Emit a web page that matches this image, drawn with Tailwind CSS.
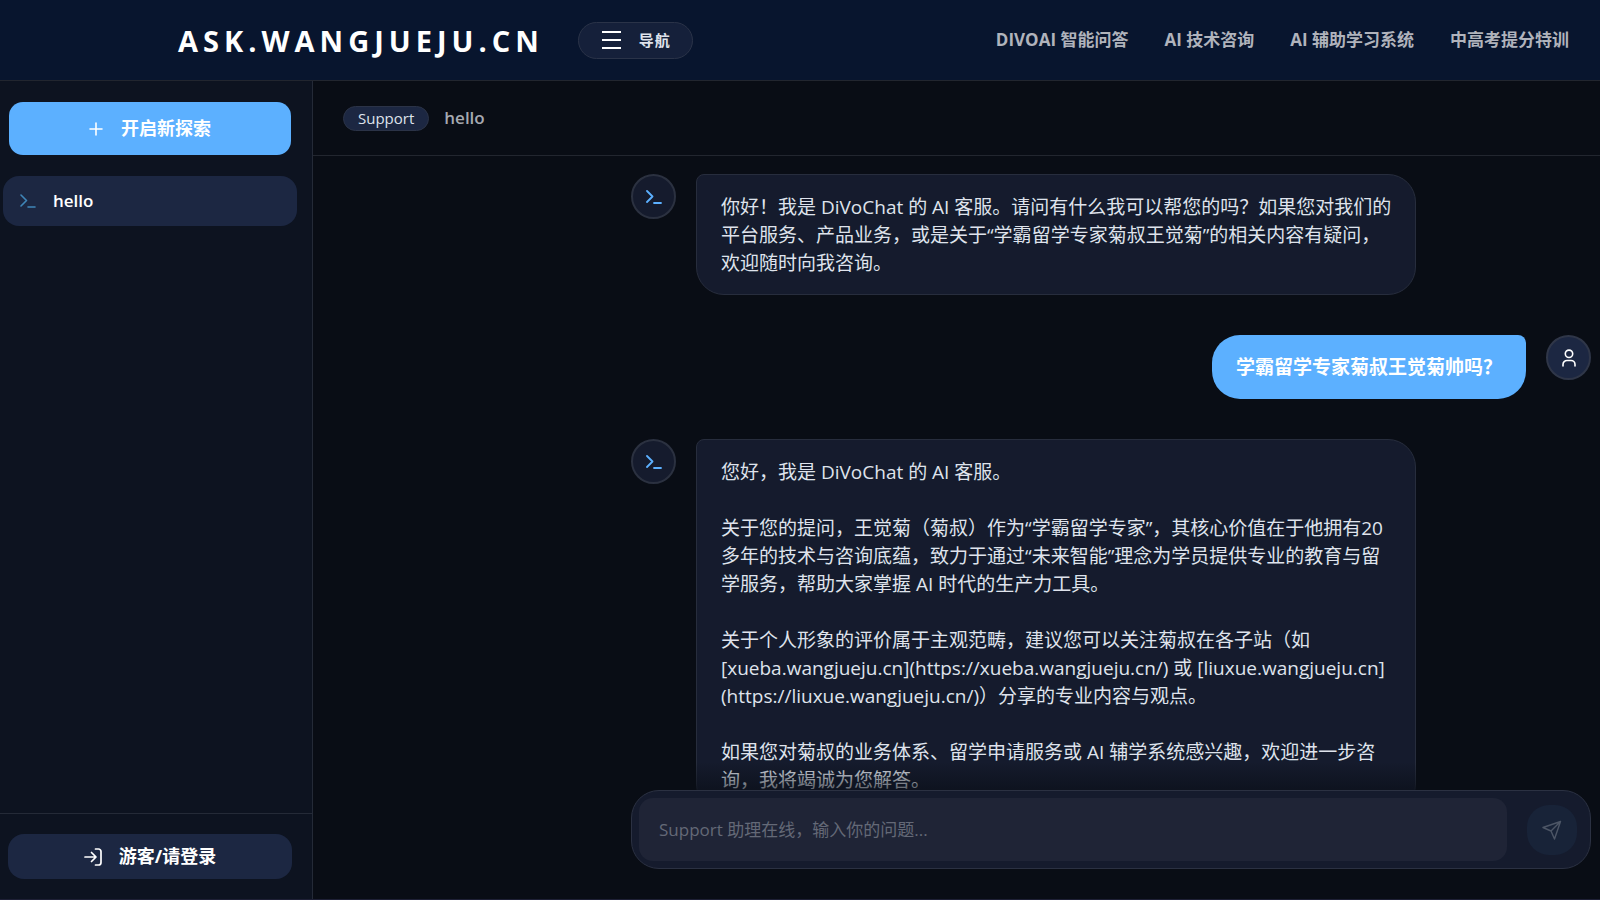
<!DOCTYPE html>
<html lang="zh-CN">
<head>
<meta charset="utf-8">
<meta name="viewport" content="width=device-width, initial-scale=1">
<title>ASK.WANGJUEJU.CN</title>
<script src="https://cdn.jsdelivr.net/npm/@tailwindcss/browser@4"></script>
</head>
<body class="flex h-screen flex-col overflow-hidden border-b border-[#1e2036] bg-[#090d15] font-['Open_Sans','Noto_Sans_CJK_SC',sans-serif] text-[#dfe3ec]">
<header class="flex h-[81px] shrink-0 items-center border-b border-[#22262f] bg-[#08152e] pr-[31px] pl-[178px]">
  <h1 class="text-[29px] leading-none font-bold tracking-[5px] text-white">ASK.WANGJUEJU.CN</h1>
  <button type="button" class="ml-[34px] flex h-[37px] w-[115px] items-center gap-[18px] rounded-full border border-[#2a3348] bg-[#15203a] pl-[23px] text-[15px] font-bold tracking-[1px] whitespace-nowrap">
    <svg class="h-[18px] w-[19px] shrink-0" viewBox="0 0 19 18" fill="none" stroke="#fff" stroke-width="2" aria-hidden="true"><path d="M0 1h19M0 9h19M0 17h19"/></svg>
    <span>导航</span>
  </button>
  <nav class="ml-auto flex gap-[36px] text-[17px] font-bold whitespace-nowrap text-[#b0b3bc]">
    <a href="#divoai">DIVOAI 智能问答</a>
    <a href="#consult">AI 技术咨询</a>
    <a href="#study">AI 辅助学习系统</a>
    <a href="#exam">中高考提分特训</a>
  </nav>
</header>
<div class="flex min-h-0 flex-1">
  <aside class="flex w-[313px] shrink-0 flex-col border-r border-[#242a37] bg-[#0d1320]">
    <div class="pt-[21px] pr-[21px] pl-[9px]">
      <button type="button" class="flex h-[53px] w-full items-center justify-center gap-[18px] rounded-[14px] bg-[#5cb0ff] text-[18px] font-bold text-white">
        <svg class="size-[14px]" viewBox="0 0 14 14" fill="none" stroke="currentColor" stroke-width="1.6" stroke-linecap="round" aria-hidden="true"><path d="M7 1v12M1 7h12"/></svg>
        开启新探索
      </button>
    </div>
    <div class="flex-1 pt-[21px] pr-[15px] pl-[3px]">
      <a href="#hello" class="flex h-[50px] items-center gap-[17px] rounded-[16px] bg-[#1c2742] pl-[17px] text-[17px] font-semibold text-white">
        <svg class="h-[14px] w-[16px]" viewBox="0 0 16 14" fill="none" stroke="#3f86b8" stroke-width="1.6" stroke-linecap="round" stroke-linejoin="round" aria-hidden="true"><path d="M1 1l5.500 5.500-5.500 5.500M8 13h7"/></svg>
        hello
      </a>
    </div>
    <div class="border-t border-[#242a37] py-[20px] pr-[20px] pl-[8px]">
      <button type="button" class="flex h-[45px] w-full items-center justify-center gap-[17px] rounded-[16px] bg-[#1c2742] text-[18px] font-bold text-white">
        <svg class="size-[18px]" viewBox="0 0 18 18" fill="none" stroke="currentColor" stroke-width="1.7" stroke-linecap="round" stroke-linejoin="round" aria-hidden="true"><path d="M1 9h10.500M7.500 4.500L12 9l-4.500 4.500M11.500 1h3a2.500 2.500 0 0 1 2.500 2.500v11a2.500 2.500 0 0 1-2.500 2.500h-3"/></svg>
        游客/请登录
      </button>
    </div>
  </aside>
  <main class="flex min-w-0 flex-1 flex-col">
    <div class="flex h-[75px] shrink-0 items-center gap-[15px] border-b border-[#22262f] pl-[30px]">
      <span class="flex h-[25px] items-center rounded-full border border-[#2b3347] bg-[#1c2742] px-[14px] text-[15px]">Support</span>
      <h2 class="text-[17px] font-semibold text-[#a6a9b1]">hello</h2>
    </div>
    <div class="relative min-h-0 flex-1 overflow-hidden pr-[9px]">
      <ul class="ml-auto flex max-w-[960px] flex-col gap-[40px] pt-[18px] text-[19px] leading-[28px]">
        <li class="flex items-start gap-[20px]">
          <span class="flex size-[45px] shrink-0 items-center justify-center rounded-full border-2 border-[#2b3140] bg-[#151b2d]">
            <svg class="h-[14px] w-[16px]" viewBox="0 0 16 14" fill="none" stroke="#5cb0ff" stroke-width="1.8" stroke-linecap="round" stroke-linejoin="round" aria-hidden="true"><path d="M1 1l5.500 5.500-5.500 5.500M8 13h7"/></svg>
          </span>
          <div class="max-w-[720px] rounded-[28px] rounded-tl-[8px] border border-[#272d3d] bg-[#151b2d] pt-[18px] pr-[18px] pb-[17px] pl-[24px]">
            <p>你好！我是 DiVoChat 的 AI 客服。请问有什么我可以帮您的吗？如果您对我们的平台服务、产品业务，或是关于“学霸留学专家菊叔王觉菊”的相关内容有疑问，欢迎随时向我咨询。</p>
          </div>
        </li>
        <li class="flex items-start justify-end gap-[20px]">
          <p class="rounded-[28px] rounded-tr-[8px] bg-[#5cb0ff] px-[24px] py-[18px] font-semibold text-white">学霸留学专家菊叔王觉菊帅吗？</p>
          <span class="flex size-[45px] shrink-0 items-center justify-center rounded-full border-2 border-[#2f3648] bg-[#1c2742]">
            <svg class="h-[18px] w-[14px]" viewBox="0 0 14 18" fill="none" stroke="#fff" stroke-width="1.6" stroke-linecap="round" aria-hidden="true"><circle cx="7" cy="4.800" r="3.700"/><path d="M1 17v-1.500a4 4 0 0 1 4-4h4a4 4 0 0 1 4 4V17"/></svg>
          </span>
        </li>
        <li class="flex items-start gap-[20px]">
          <span class="flex size-[45px] shrink-0 items-center justify-center rounded-full border-2 border-[#2b3140] bg-[#151b2d]">
            <svg class="h-[14px] w-[16px]" viewBox="0 0 16 14" fill="none" stroke="#5cb0ff" stroke-width="1.8" stroke-linecap="round" stroke-linejoin="round" aria-hidden="true"><path d="M1 1l5.500 5.500-5.500 5.500M8 13h7"/></svg>
          </span>
          <div class="flex max-w-[720px] flex-col gap-[28px] rounded-[28px] rounded-tl-[8px] border border-[#272d3d] bg-[#151b2d] pt-[18px] pr-[18px] pb-[17px] pl-[24px]">
            <p>您好，我是 DiVoChat 的 AI 客服。</p>
            <p>关于您的提问，王觉菊（菊叔）作为“学霸留学专家”，其核心价值在于他拥有20多年的技术与咨询底蕴，致力于通过“未来智能”理念为学员提供专业的教育与留学服务，帮助大家掌握 AI 时代的生产力工具。</p>
            <p>关于个人形象的评价属于主观范畴，建议您可以关注菊叔在各子站（如 [xueba.wangjueju.cn](https://xueba.wangjueju.cn/) 或 [liuxue.wangjueju.cn]<wbr>(https://liuxue.wangjueju.cn/)）分享的专业内容与观点。</p>
            <p>如果您对菊叔的业务体系、留学申请服务或 AI 辅学系统感兴趣，欢迎进一步咨询，我将竭诚为您解答。</p>
          </div>
        </li>
      </ul>
      <div class="pointer-events-none absolute inset-x-0 bottom-0 h-[28px] bg-linear-to-b from-transparent to-[#090d15]/60"></div>
    </div>
    <form class="mr-[9px] mb-[30px] pl-[9px]">
      <div class="ml-auto flex max-w-[960px] items-center gap-[20px] rounded-[28px] border border-[#2b3142] bg-[#151b2d] py-[7px] pr-[13px] pl-[7px]">
        <input type="text" aria-label="输入你的问题" placeholder="Support 助理在线，输入你的问题..." class="h-[63px] min-w-0 flex-1 rounded-[14px] bg-[#1f2436] px-[20px] text-[17px] outline-none placeholder:text-[#646977]">
        <button type="button" aria-label="发送" class="flex size-[50px] items-center justify-center rounded-[22px] bg-[#182338]">
          <svg class="size-[20px]" viewBox="0 0 20 20" fill="none" stroke="#4d5666" stroke-width="1.400" stroke-linejoin="round" aria-hidden="true"><path d="M18.500 1.500L1 7.500l8 3.500 3.500 8zM18.500 1.500L9 11"/></svg>
        </button>
      </div>
    </form>
  </main>
</div>
</body>
</html>
